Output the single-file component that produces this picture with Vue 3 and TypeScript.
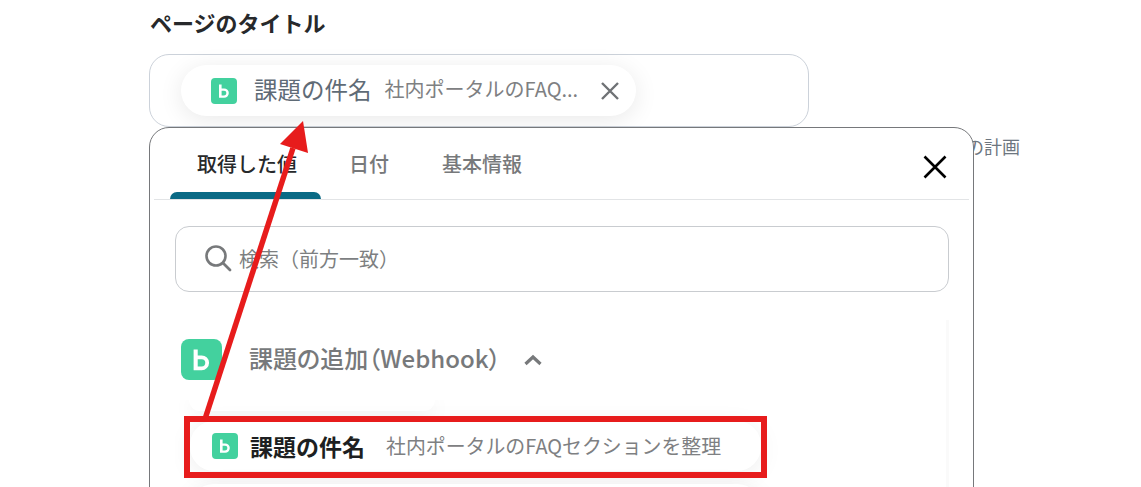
<script setup lang="ts">
const tabs = ['取得した値', '日付', '基本情報']
const fullTitle = '社内ポータルのFAQセクションを整理'
const logoPath = 'M8 6.6h2.6v3.8h2.5a4.7 4.7 0 0 1 0 9.4H8zM10.6 12.8v4.6h2.5a2.3 2.3 0 0 0 0-4.6z'
</script>

<template>
  <div class="page">
    <h2 class="label">ページのタイトル</h2>
    <div class="field">
      <div class="chip">
        <span class="logo small">
          <svg viewBox="0 0 26 26"><path :d="logoPath" fill="#fff" fill-rule="evenodd" /></svg>
        </span>
        <span class="chip-name">課題の件名</span>
        <span class="chip-value">社内ポータルのFAQ...</span>
        <svg class="chip-close" viewBox="0 0 22 22"><path d="M3 3l16 16M19 3L3 19" stroke="#6f7275" stroke-width="2.4" /></svg>
      </div>
    </div>
    <span class="behind">の計画</span>

    <div class="panel">
      <div class="tabs">
        <button v-for="(tab, i) in tabs" :key="tab" class="tab" :class="{ active: i === 0 }">{{ tab }}</button>
        <svg class="panel-close" viewBox="0 0 24 24"><path d="M1.5 1.5l21 21M22.5 1.5l-21 21" stroke="#000" stroke-width="2.6" /></svg>
      </div>
      <div class="body">
        <div class="search">
          <svg class="search-icon" viewBox="0 0 28 28"><circle cx="12" cy="12" r="9.5" fill="none" stroke="#77797b" stroke-width="2.6" /><path d="M19 19l7 7" stroke="#77797b" stroke-width="2.8" stroke-linecap="round" /></svg>
          <span>検索（前方一致）</span>
        </div>
        <div class="scroll-area">
          <div class="list">
            <div class="section">
              <span class="logo big">
                <svg viewBox="0 0 26 26"><path :d="logoPath" fill="#fff" fill-rule="evenodd" /></svg>
              </span>
              <span class="section-name">課題の追加（Webhook）</span>
              <svg class="chevron" viewBox="0 0 20 12"><path d="M2.5 10L10 3l7.5 7" fill="none" stroke="#77797b" stroke-width="3.2" /></svg>
            </div>
            <div class="stub"></div>
            <div class="row">
              <span class="logo small">
                <svg viewBox="0 0 26 26"><path :d="logoPath" fill="#fff" fill-rule="evenodd" /></svg>
              </span>
              <span class="row-name">課題の件名</span>
              <span class="row-value">{{ fullTitle }}</span>
            </div>
            <div class="row next"></div>
          </div>
          <div class="scrollbar">
            <svg class="scroll-up" viewBox="0 0 16 12"><path d="M8 2L14 10H2Z" fill="#8a8a8a" stroke="#8a8a8a" stroke-width="2" stroke-linejoin="round" /></svg>
          </div>
        </div>
      </div>
    </div>

    <!-- annotation over the screenshot -->
    <div class="red-box"></div>
    <svg class="arrow" width="1141" height="487" viewBox="0 0 1141 487">
      <path d="M205 419L293 148" stroke="#e71c1c" stroke-width="5.5" fill="none" />
      <path d="M303 121L280 144L308 153Z" fill="#e71c1c" />
    </svg>
  </div>
</template>

<style scoped>
.page {
  position: relative;
  width: 1141px;
  height: 487px;
  overflow: hidden;
  background: #fff;
  box-sizing: border-box;
  padding-left: 149px;
  font-family: "Noto Sans CJK JP", "Noto Sans", sans-serif;
}
.label {
  margin: 0;
  padding: 6px 0 0 1px;
  height: 54px;
  box-sizing: border-box;
  font-size: 22px;
  line-height: 32px;
  font-weight: 700;
  color: #27292b;
}
.field {
  width: 660px;
  height: 73px;
  box-sizing: border-box;
  border: 1px solid #ccd2da;
  border-radius: 20px;
  padding: 10px 31px;
}
.chip {
  display: inline-flex;
  align-items: center;
  width: 455px;
  height: 51px;
  box-sizing: border-box;
  padding-left: 30px;
  border-radius: 26px;
  background: #fff;
  box-shadow: 0 4px 24px rgba(0, 0, 0, 0.09);
}
.logo {
  display: flex;
  flex: none;
  background: #43d19e;
}
.logo svg {
  display: block;
  width: 100%;
  height: 100%;
}
.logo.small {
  width: 26px;
  height: 26px;
  border-radius: 4px;
}
.logo.big {
  width: 41px;
  height: 41px;
  border-radius: 8px;
}
.chip-name {
  margin-left: 17px;
  padding-bottom: 3px;
  font-size: 23.5px;
  line-height: 30px;
  color: #5f6b76;
}
.chip-value {
  margin-left: 13px;
  padding-bottom: 3px;
  font-size: 20px;
  line-height: 30px;
  color: #7e8082;
  white-space: nowrap;
}
.chip-close {
  width: 22px;
  height: 22px;
  margin-left: 21px;
  flex: none;
}
.behind {
  position: absolute;
  left: 966px;
  top: 133px;
  font-size: 18px;
  line-height: 26px;
  color: #6d7680;
}
.panel {
  position: relative;
  width: 825px;
  height: 400px;
  box-sizing: border-box;
  background: #fff;
  border: 1px solid #76787b;
  border-radius: 20px;
}
.tabs {
  display: flex;
  align-items: flex-start;
  height: 72px;
  box-sizing: border-box;
  margin: 0 4px;
  padding-left: 16px;
  border-bottom: 1px solid #e2e4e6;
}
.tab {
  position: relative;
  height: 71px;
  box-sizing: border-box;
  padding: 1px 53px 0 0;
  border: 0;
  background: none;
  font-family: inherit;
  font-size: 20px;
  line-height: 30px;
  font-weight: 500;
  color: #77797b;
  white-space: nowrap;
}
.tab.active {
  width: 151px;
  color: #27292b;
  padding: 1px 0 0 27px;
  text-align: left;
  margin-right: 28px;
}
.tab.active::after {
  content: "";
  position: absolute;
  left: 0;
  right: 0;
  bottom: 0;
  height: 7px;
  background: #0a6a85;
  border-radius: 7px 7px 0 0;
}
.panel-close {
  width: 24px;
  height: 24px;
  margin: 27px 22px 0 auto;
  flex: none;
}
.body {
  padding: 26px 24px 0 25px;
}
.search {
  display: flex;
  align-items: center;
  gap: 7px;
  height: 66px;
  box-sizing: border-box;
  padding: 0 0 2px 28px;
  border: 1px solid #c9ccd0;
  border-radius: 14px;
  font-size: 20px;
  color: #7d7f81;
}
.search-icon {
  width: 28px;
  height: 28px;
  flex: none;
}
.scroll-area {
  display: flex;
  margin-top: 28px;
  height: 200px;
  overflow: hidden;
}
.list {
  flex: 1;
  min-width: 0;
}
.section {
  position: relative;
  z-index: 1;
  display: flex;
  align-items: flex-start;
  height: 80px;
  box-sizing: border-box;
  padding: 19px 0 0 6px;
  background: #fff;
}
.section-name {
  margin-left: 27px;
  margin-top: 4px;
  font-size: 24px;
  line-height: 30px;
  font-weight: 500;
  font-feature-settings: "palt";
  color: #77797b;
  white-space: nowrap;
}
.chevron {
  width: 20px;
  height: 12px;
  margin: 15px 0 0 22px;
  flex: none;
}
.stub {
  width: 246px;
  height: 11px;
  margin-left: 14px;
  border-radius: 0 0 20px 20px;
  background: #fff;
  box-shadow: 0 4px 20px rgba(0, 0, 0, 0.08);
}
.row {
  display: flex;
  align-items: center;
  width: 571px;
  height: 50px;
  margin: 10px 0 0 15px;
  padding-left: 22px;
  box-sizing: border-box;
  border-radius: 24px;
  background: #fff;
  box-shadow: 0 4px 24px rgba(0, 0, 0, 0.07);
}
.row.next {
  margin-top: 13px;
}
.row-name {
  margin-left: 12px;
  padding-bottom: 1px;
  font-size: 23px;
  line-height: 30px;
  font-weight: 700;
  color: #1d1f21;
}
.row-value {
  margin-left: 21px;
  font-size: 19.9px;
  line-height: 30px;
  color: #7e8082;
  white-space: nowrap;
}
.scrollbar {
  flex: none;
  width: 23px;
  margin-right: -20px;
  background: #fafafa;
}
.scroll-up {
  display: block;
  width: 16px;
  height: 12px;
  margin: 5px 0 0 3px;
}
.red-box {
  position: absolute;
  z-index: 2;
  left: 184px;
  top: 416px;
  width: 583px;
  height: 62px;
  box-sizing: border-box;
  border: 6px solid #e71c1c;
}
.arrow {
  position: absolute;
  z-index: 2;
  left: 0;
  top: 0;
  pointer-events: none;
}
</style>
